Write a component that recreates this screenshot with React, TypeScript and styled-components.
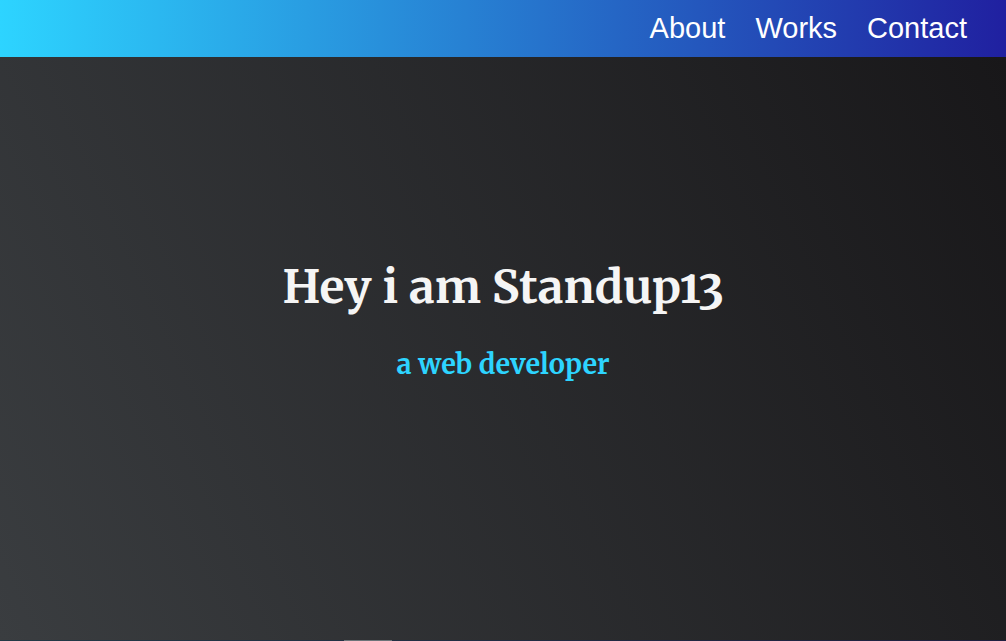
import React from "react";
import styled, { createGlobalStyle } from "styled-components";

const GlobalStyle = createGlobalStyle`
  * {
    box-sizing: border-box;
  }
  body {
    margin: 0;
    background: #181719;
  }
`;

const Page = styled.div`
  display: flex;
  flex-direction: column;
  min-height: 100vh;
`;

const NavBar = styled.nav`
  background: linear-gradient(to right, #2dd4ff, #2020a0);
`;

const NavList = styled.ul`
  display: flex;
  justify-content: flex-end;
  gap: 30px;
  margin: 0;
  padding: 12px 39px 12px 24px;
  list-style: none;
`;

const NavLink = styled.a`
  display: block;
  color: #ffffff;
  font-family: "Liberation Sans", Arial, sans-serif;
  font-size: 29px;
  line-height: 33px;
  text-decoration: none;
`;

const Hero = styled.main`
  display: flex;
  flex: 1;
  flex-direction: column;
  align-items: center;
  justify-content: center;
  gap: 29px;
  padding-bottom: 59px;
  background: linear-gradient(65deg, #3a3d40 0%, #181719 100%);
  font-family: Merriweather, "DejaVu Serif Condensed", "DejaVu Serif", serif;
  font-variant-numeric: oldstyle-nums;
  text-align: center;
`;

const Title = styled.h1`
  margin: 0;
  color: #f5f5f5;
  font-size: 46px;
  font-weight: 700;
  line-height: 60px;
`;

const Subtitle = styled.h2`
  margin: 0;
  color: #2dd4ff;
  font-size: 27px;
  font-weight: 700;
  line-height: 36px;
`;

const NextSection = styled.div`
  display: flex;
  height: 1px;
  padding-left: 34.2%;
  background: linear-gradient(to right, #233a46, #1f1f40);
`;

const SectionEdge = styled.div`
  width: 48px;
  background: #6c747a;
`;

const links = ["About", "Works", "Contact"];

export default function App() {
  return (
    <Page>
      <GlobalStyle />
      <NavBar>
        <NavList>
          {links.map((label) => (
            <li key={label}>
              <NavLink href={"#" + label.toLowerCase()}>{label}</NavLink>
            </li>
          ))}
        </NavList>
      </NavBar>
      <Hero>
        <Title>Hey i am Standup13</Title>
        <Subtitle>a web developer</Subtitle>
      </Hero>
      <NextSection>
        <SectionEdge />
      </NextSection>
    </Page>
  );
}
